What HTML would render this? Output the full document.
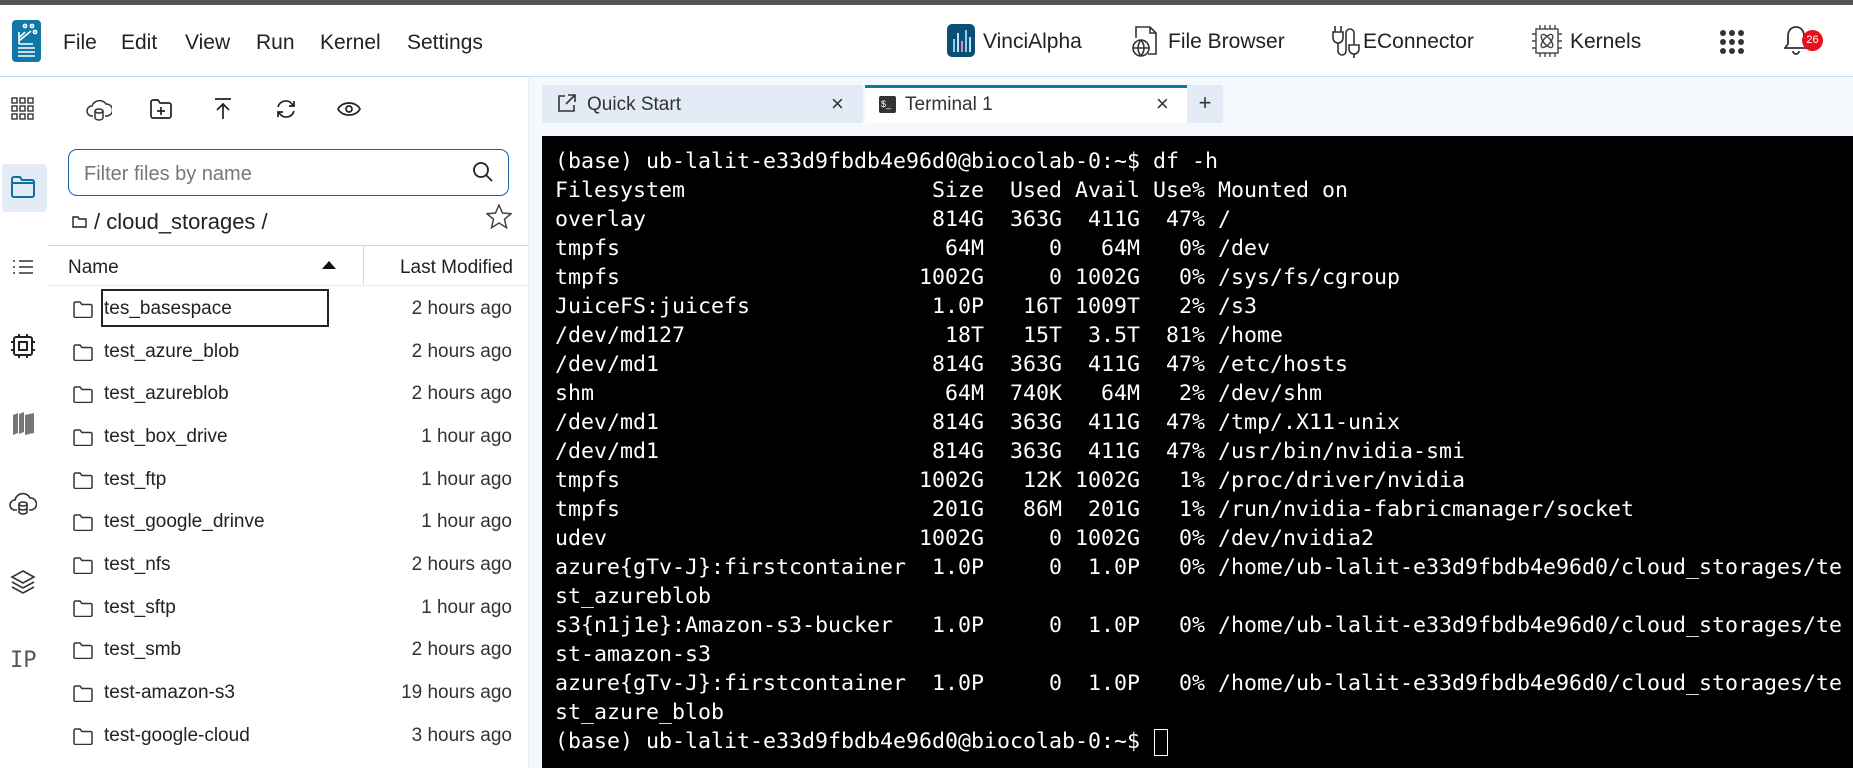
<!DOCTYPE html>
<html><head><meta charset="utf-8"><style>
*{box-sizing:border-box;margin:0;padding:0}
body{width:1853px;height:768px;overflow:hidden;background:#fff;font-family:"Liberation Sans",sans-serif;color:#222;position:relative}
.a{position:absolute}
.menu span{position:absolute;top:31px;font-size:21px;color:#222}
.top span.t{position:absolute;top:30px;font-size:21px;color:#222}
.row{position:absolute;left:54px;width:474px;height:43px;font-size:19px}
.row .n{position:absolute;left:50px;top:10px}
.row .d{position:absolute;right:16px;top:10px;color:#333}
.row svg{position:absolute;left:19px;top:13px}
pre{font-family:"DejaVu Sans Mono","Liberation Mono",monospace;font-size:21.6px;line-height:29px;color:#fff}
</style></head><body>
<div class="a" style="left:0;top:0;width:1853px;height:5px;background:#55564f"></div>
<svg class="a" style="left:12px;top:20px" width="29" height="42" viewBox="0 0 29 42"><rect width="29" height="42" rx="4" fill="#0f78a6"/><g stroke="#fff" stroke-width="1.6" fill="none"><path d="M7 24V12M7 18l6-6M7 21l12-10M7 24h14"/><circle cx="13" cy="6" r="1.6"/><circle cx="20" cy="6" r="1.6"/><circle cx="23" cy="12" r="1.6"/><path d="M6 28h17M6 32h17M6 36h17"/></g></svg>
<div class="menu"><span style="left:63px">File</span><span style="left:121px">Edit</span><span style="left:185px">View</span><span style="left:256px">Run</span><span style="left:320px">Kernel</span><span style="left:407px">Settings</span></div>
<div class="top">
<svg class="a" style="left:947px;top:24px" width="28" height="33"><rect width="28" height="33" rx="5" fill="#0c4f76"/><g stroke-width="2"><path d="M7 28V15" stroke="#7fd3f0"/><path d="M11 28V9" stroke="#b9e3f5"/><path d="M15 28V17" stroke="#f07fb5"/><path d="M19 28V6" stroke="#7fd3f0"/><path d="M23 28V13" stroke="#b9e3f5"/></g></svg>
<span class="t" style="left:983px">VinciAlpha</span>
<svg class="a" style="left:1130px;top:24px" width="30" height="34" fill="none" stroke="#333" stroke-width="1.6"><path d="M6 14V3h14l6 6v21h-8"/><path d="M20 3v6h6"/><circle cx="11" cy="24" r="8"/><path d="M3 24h16M11 16c-4 5-4 11 0 16M11 16c4 5 4 11 0 16"/></svg>
<span class="t" style="left:1168px">File Browser</span>
<svg class="a" style="left:1332px;top:24px" width="28" height="34" fill="none" stroke="#333" stroke-width="1.6"><path d="M3 2v6M9 2v6M1 8h10v6a5 5 0 0 1-10 0zM6 19v8a4 4 0 0 0 8 0V9a4 4 0 0 1 8 0v12M17 21h10v4a5 5 0 0 1-10 0zM22 30v4"/></svg>
<span class="t" style="left:1363px">EConnector</span>
<svg class="a" style="left:1531px;top:24px" width="32" height="34" fill="none" stroke="#444" stroke-width="1.4"><rect x="5" y="5" width="22" height="24"/><path d="M9 1v4M14 1v4M19 1v4M24 1v4M9 29v4M14 29v4M19 29v4M24 29v4M1 10h4M1 17h4M1 24h4M27 10h4M27 17h4M27 24h4"/><ellipse cx="16" cy="17" rx="8" ry="3.5" transform="rotate(50 16 17)"/><ellipse cx="16" cy="17" rx="8" ry="3.5" transform="rotate(-50 16 17)"/></svg>
<span class="t" style="left:1570px">Kernels</span>
<svg class="a" style="left:1719px;top:29px" width="26" height="26" fill="#333"><circle cx="4" cy="4" r="3"/><circle cx="13" cy="4" r="3"/><circle cx="22" cy="4" r="3"/><circle cx="4" cy="13" r="3"/><circle cx="13" cy="13" r="3"/><circle cx="22" cy="13" r="3"/><circle cx="4" cy="22" r="3"/><circle cx="13" cy="22" r="3"/><circle cx="22" cy="22" r="3"/></svg>
<svg class="a" style="left:1784px;top:24px" width="24" height="32" fill="none" stroke="#333" stroke-width="1.8"><path d="M12 3c-5 0-8 4-8 9v8l-3 4h22l-3-4v-8c0-5-3-9-8-9zM9 27a3 3 0 0 0 6 0"/></svg>
<div class="a" style="left:1802px;top:30px;width:21px;height:21px;border-radius:50%;background:#e8101c;color:#fff;font-size:11px;text-align:center;line-height:21px">26</div>
</div>
<div class="a" style="left:0;top:76px;width:1853px;height:1px;background:#c9dbee"></div>
<svg class="a" style="left:11px;top:97px" width="24" height="24" fill="none" stroke="#333" stroke-width="1.4"><rect x="1" y="1" width="5" height="5"/><rect x="9" y="1" width="5" height="5"/><rect x="17" y="1" width="5" height="5"/><rect x="1" y="9" width="5" height="5"/><rect x="9" y="9" width="5" height="5"/><rect x="17" y="9" width="5" height="5"/><rect x="1" y="17" width="5" height="5"/><rect x="9" y="17" width="5" height="5"/><rect x="17" y="17" width="5" height="5"/></svg>
<div class="a" style="left:2px;top:164px;width:45px;height:48px;background:#e3ebf6;border-radius:4px"></div>
<svg class="a" style="left:11px;top:176px" width="24" height="22" fill="none" stroke="#0f6fa0" stroke-width="2"><path d="M1 3a2 2 0 0 1 2-2h6l2 3h10a2 2 0 0 1 2 2v13a2 2 0 0 1-2 2H3a2 2 0 0 1-2-2z"/><path d="M1 7h22"/></svg>
<svg class="a" style="left:12px;top:259px" width="22" height="16" stroke="#333" stroke-width="1.6"><path d="M1 2h2M1 8h2M1 14h2M7 2h14M7 8h14M7 14h14"/></svg>
<svg class="a" style="left:10px;top:333px" width="26" height="26" fill="none" stroke="#222" stroke-width="2"><rect x="4" y="4" width="18" height="18" rx="2"/><rect x="9" y="9" width="8" height="8"/><path d="M9 1v3M17 1v3M9 22v3M17 22v3M1 9h3M1 17h3M22 9h3M22 17h3"/></svg>
<svg class="a" style="left:11px;top:411px" width="24" height="26" fill="#777"><path d="M2 4l5-2v20l-5 2zM8 3l5-2v20l-5 2zM14 4l9-2v20l-9 2z"/></svg>
<svg class="a" style="left:9px;top:490px" width="28" height="26" fill="none" stroke="#333" stroke-width="1.6"><path d="M8 20H6a5 5 0 0 1 0-10 8 8 0 0 1 15-2 6 6 0 0 1 1 12h-2"/><ellipse cx="14" cy="14" rx="4" ry="2"/><path d="M10 14v8c0 1 2 2 4 2s4-1 4-2v-8M10 18c0 1 2 2 4 2s4-1 4-2"/></svg>
<svg class="a" style="left:10px;top:569px" width="26" height="26" fill="none" stroke="#333" stroke-width="1.6"><path d="M13 2l11 6-11 6L2 8zM2 13l11 6 11-6M2 18l11 6 11-6"/></svg>
<div class="a" style="left:10px;top:648px;font-family:'DejaVu Sans Mono',monospace;font-size:22px;color:#555">IP</div>
<svg class="a" style="left:86px;top:98px" width="26" height="24" fill="none" stroke="#333" stroke-width="1.5"><path d="M7 18H6a5 5 0 0 1 0-10 8 8 0 0 1 14-2 6 6 0 0 1 1 12h-2"/><ellipse cx="13" cy="13" rx="4" ry="2"/><path d="M9 13v7c0 1 2 2 4 2s4-1 4-2v-7"/></svg>
<svg class="a" style="left:150px;top:99px" width="22" height="20" fill="none" stroke="#222" stroke-width="1.7"><path d="M1 3a2 2 0 0 1 2-2h5l2 3h9a2 2 0 0 1 2 2v11a2 2 0 0 1-2 2H3a2 2 0 0 1-2-2z"/><path d="M11 8v8M7 12h8"/></svg>
<svg class="a" style="left:213px;top:97px" width="20" height="24" fill="none" stroke="#222" stroke-width="1.7"><path d="M2 2h16M10 22V7M4 13l6-6 6 6"/></svg>
<svg class="a" style="left:275px;top:98px" width="22" height="22" fill="none" stroke="#222" stroke-width="1.7"><path d="M3 9a8 8 0 0 1 14-3l2 2M19 3v5h-5M19 13a8 8 0 0 1-14 3l-2-2M3 19v-5h5"/></svg>
<svg class="a" style="left:337px;top:101px" width="24" height="16" fill="none" stroke="#222" stroke-width="1.7"><path d="M1 8c4-8 18-8 22 0-4 8-18 8-22 0z"/><circle cx="12" cy="8" r="3"/></svg>
<div class="a" style="left:68px;top:149px;width:441px;height:47px;border:1.5px solid #1f5fa8;border-radius:9px"></div>
<div class="a" style="left:84px;top:163px;font-size:20px;color:#777">Filter files by name</div>
<svg class="a" style="left:472px;top:161px" width="22" height="22" fill="none" stroke="#222" stroke-width="1.8"><circle cx="9" cy="9" r="7"/><path d="M14 14l6 6"/></svg>
<svg class="a" style="left:72px;top:215px" width="15" height="13" fill="none" stroke="#222" stroke-width="1.4"><path d="M1 2h5l1 2h7v8H1z"/></svg>
<div class="a" style="left:94px;top:209px;font-size:22px;color:#222">/ cloud_storages /</div>
<svg class="a" style="left:486px;top:204px" width="26" height="25" fill="none" stroke="#444" stroke-width="1.5"><path d="M13 1l3.5 8 8.5.7-6.5 5.6 2 8.4L13 19l-7.5 4.7 2-8.4L1 9.7 9.5 9z"/></svg>
<div class="a" style="left:48px;top:245px;width:480px;height:1px;background:#c9dbee"></div>
<div class="a" style="left:48px;top:285px;width:480px;height:1px;background:#e6ecf3"></div>
<div class="a" style="left:363px;top:246px;width:1px;height:39px;background:#c9dbee"></div>
<div class="a" style="left:68px;top:257px;font-size:19px;color:#222">Name</div>
<svg class="a" style="left:322px;top:261px" width="14" height="8"><path d="M0 8L7 0l7 8z" fill="#111"/></svg>
<div class="a" style="left:373px;top:257px;font-size:19px;color:#222;width:140px;text-align:right">Last Modified</div>
<div class="a" style="left:528px;top:77px;width:1px;height:691px;background:#e6ecf3"></div>
<div class="row" style="top:288px"><svg width="20" height="17" fill="none" stroke="#333" stroke-width="1.5"><path d="M1 2.5a1.5 1.5 0 0 1 1.5-1.5h4.5l2 2.5h8.5a1.5 1.5 0 0 1 1.5 1.5v10a1.5 1.5 0 0 1-1.5 1.5h-15a1.5 1.5 0 0 1-1.5-1.5z"/></svg><span class="n">tes_basespace</span><span class="d">2 hours ago</span></div>
<div class="a" style="left:101px;top:289px;width:228px;height:38px;border:2px solid #222"></div>
<div class="row" style="top:331px"><svg width="20" height="17" fill="none" stroke="#333" stroke-width="1.5"><path d="M1 2.5a1.5 1.5 0 0 1 1.5-1.5h4.5l2 2.5h8.5a1.5 1.5 0 0 1 1.5 1.5v10a1.5 1.5 0 0 1-1.5 1.5h-15a1.5 1.5 0 0 1-1.5-1.5z"/></svg><span class="n">test_azure_blob</span><span class="d">2 hours ago</span></div>
<div class="row" style="top:373px"><svg width="20" height="17" fill="none" stroke="#333" stroke-width="1.5"><path d="M1 2.5a1.5 1.5 0 0 1 1.5-1.5h4.5l2 2.5h8.5a1.5 1.5 0 0 1 1.5 1.5v10a1.5 1.5 0 0 1-1.5 1.5h-15a1.5 1.5 0 0 1-1.5-1.5z"/></svg><span class="n">test_azureblob</span><span class="d">2 hours ago</span></div>
<div class="row" style="top:416px"><svg width="20" height="17" fill="none" stroke="#333" stroke-width="1.5"><path d="M1 2.5a1.5 1.5 0 0 1 1.5-1.5h4.5l2 2.5h8.5a1.5 1.5 0 0 1 1.5 1.5v10a1.5 1.5 0 0 1-1.5 1.5h-15a1.5 1.5 0 0 1-1.5-1.5z"/></svg><span class="n">test_box_drive</span><span class="d">1 hour ago</span></div>
<div class="row" style="top:459px"><svg width="20" height="17" fill="none" stroke="#333" stroke-width="1.5"><path d="M1 2.5a1.5 1.5 0 0 1 1.5-1.5h4.5l2 2.5h8.5a1.5 1.5 0 0 1 1.5 1.5v10a1.5 1.5 0 0 1-1.5 1.5h-15a1.5 1.5 0 0 1-1.5-1.5z"/></svg><span class="n">test_ftp</span><span class="d">1 hour ago</span></div>
<div class="row" style="top:501px"><svg width="20" height="17" fill="none" stroke="#333" stroke-width="1.5"><path d="M1 2.5a1.5 1.5 0 0 1 1.5-1.5h4.5l2 2.5h8.5a1.5 1.5 0 0 1 1.5 1.5v10a1.5 1.5 0 0 1-1.5 1.5h-15a1.5 1.5 0 0 1-1.5-1.5z"/></svg><span class="n">test_google_drinve</span><span class="d">1 hour ago</span></div>
<div class="row" style="top:544px"><svg width="20" height="17" fill="none" stroke="#333" stroke-width="1.5"><path d="M1 2.5a1.5 1.5 0 0 1 1.5-1.5h4.5l2 2.5h8.5a1.5 1.5 0 0 1 1.5 1.5v10a1.5 1.5 0 0 1-1.5 1.5h-15a1.5 1.5 0 0 1-1.5-1.5z"/></svg><span class="n">test_nfs</span><span class="d">2 hours ago</span></div>
<div class="row" style="top:587px"><svg width="20" height="17" fill="none" stroke="#333" stroke-width="1.5"><path d="M1 2.5a1.5 1.5 0 0 1 1.5-1.5h4.5l2 2.5h8.5a1.5 1.5 0 0 1 1.5 1.5v10a1.5 1.5 0 0 1-1.5 1.5h-15a1.5 1.5 0 0 1-1.5-1.5z"/></svg><span class="n">test_sftp</span><span class="d">1 hour ago</span></div>
<div class="row" style="top:629px"><svg width="20" height="17" fill="none" stroke="#333" stroke-width="1.5"><path d="M1 2.5a1.5 1.5 0 0 1 1.5-1.5h4.5l2 2.5h8.5a1.5 1.5 0 0 1 1.5 1.5v10a1.5 1.5 0 0 1-1.5 1.5h-15a1.5 1.5 0 0 1-1.5-1.5z"/></svg><span class="n">test_smb</span><span class="d">2 hours ago</span></div>
<div class="row" style="top:672px"><svg width="20" height="17" fill="none" stroke="#333" stroke-width="1.5"><path d="M1 2.5a1.5 1.5 0 0 1 1.5-1.5h4.5l2 2.5h8.5a1.5 1.5 0 0 1 1.5 1.5v10a1.5 1.5 0 0 1-1.5 1.5h-15a1.5 1.5 0 0 1-1.5-1.5z"/></svg><span class="n">test-amazon-s3</span><span class="d">19 hours ago</span></div>
<div class="row" style="top:715px"><svg width="20" height="17" fill="none" stroke="#333" stroke-width="1.5"><path d="M1 2.5a1.5 1.5 0 0 1 1.5-1.5h4.5l2 2.5h8.5a1.5 1.5 0 0 1 1.5 1.5v10a1.5 1.5 0 0 1-1.5 1.5h-15a1.5 1.5 0 0 1-1.5-1.5z"/></svg><span class="n">test-google-cloud</span><span class="d">3 hours ago</span></div>
<div class="a" style="left:529px;top:77px;width:1324px;height:691px;background:#f5f8fc"></div>
<div class="a" style="left:542px;top:85px;width:321px;height:38px;background:#e3ebf6"></div>
<svg class="a" style="left:557px;top:94px" width="19" height="19" fill="none" stroke="#333" stroke-width="1.6"><path d="M8 2H2v15h15v-6M11 1h7v7M18 1l-9 9"/></svg>
<div class="a" style="left:587px;top:94px;font-size:19px;color:#333">Quick Start</div>
<div class="a" style="left:831px;top:91px;font-size:22px;color:#333">×</div>
<div class="a" style="left:865px;top:85px;width:322px;height:38px;background:#fff;border-top:3px solid #0e77a0"></div>
<div class="a" style="left:879px;top:96px;width:17px;height:17px;background:#333;border-radius:2px;color:#fff;font-size:9px;line-height:17px;padding-left:2px">$_</div>
<div class="a" style="left:905px;top:94px;font-size:19px;color:#333">Terminal 1</div>
<div class="a" style="left:1156px;top:91px;font-size:22px;color:#333">×</div>
<div class="a" style="left:1187px;top:85px;width:36px;height:38px;background:#e3ebf6;font-size:22px;text-align:center;line-height:36px;color:#333">+</div>
<div class="a" style="left:542px;top:136px;width:1311px;height:632px;background:#000"></div>
<pre class="a" style="left:555px;top:147px">(base) ub-lalit-e33d9fbdb4e96d0@biocolab-0:~$ df -h
Filesystem                   Size  Used Avail Use% Mounted on
overlay                      814G  363G  411G  47% /
tmpfs                         64M     0   64M   0% /dev
tmpfs                       1002G     0 1002G   0% /sys/fs/cgroup
JuiceFS:juicefs              1.0P   16T 1009T   2% /s3
/dev/md127                    18T   15T  3.5T  81% /home
/dev/md1                     814G  363G  411G  47% /etc/hosts
shm                           64M  740K   64M   2% /dev/shm
/dev/md1                     814G  363G  411G  47% /tmp/.X11-unix
/dev/md1                     814G  363G  411G  47% /usr/bin/nvidia-smi
tmpfs                       1002G   12K 1002G   1% /proc/driver/nvidia
tmpfs                        201G   86M  201G   1% /run/nvidia-fabricmanager/socket
udev                        1002G     0 1002G   0% /dev/nvidia2
azure{gTv-J}:firstcontainer  1.0P     0  1.0P   0% /home/ub-lalit-e33d9fbdb4e96d0/cloud_storages/te
st_azureblob
s3{n1j1e}:Amazon-s3-bucker   1.0P     0  1.0P   0% /home/ub-lalit-e33d9fbdb4e96d0/cloud_storages/te
st-amazon-s3
azure{gTv-J}:firstcontainer  1.0P     0  1.0P   0% /home/ub-lalit-e33d9fbdb4e96d0/cloud_storages/te
st_azure_blob
(base) ub-lalit-e33d9fbdb4e96d0@biocolab-0:~$ </pre>
<div class="a" style="left:1154px;top:729px;width:14px;height:27px;border:1.5px solid #fff"></div>
</body></html>
